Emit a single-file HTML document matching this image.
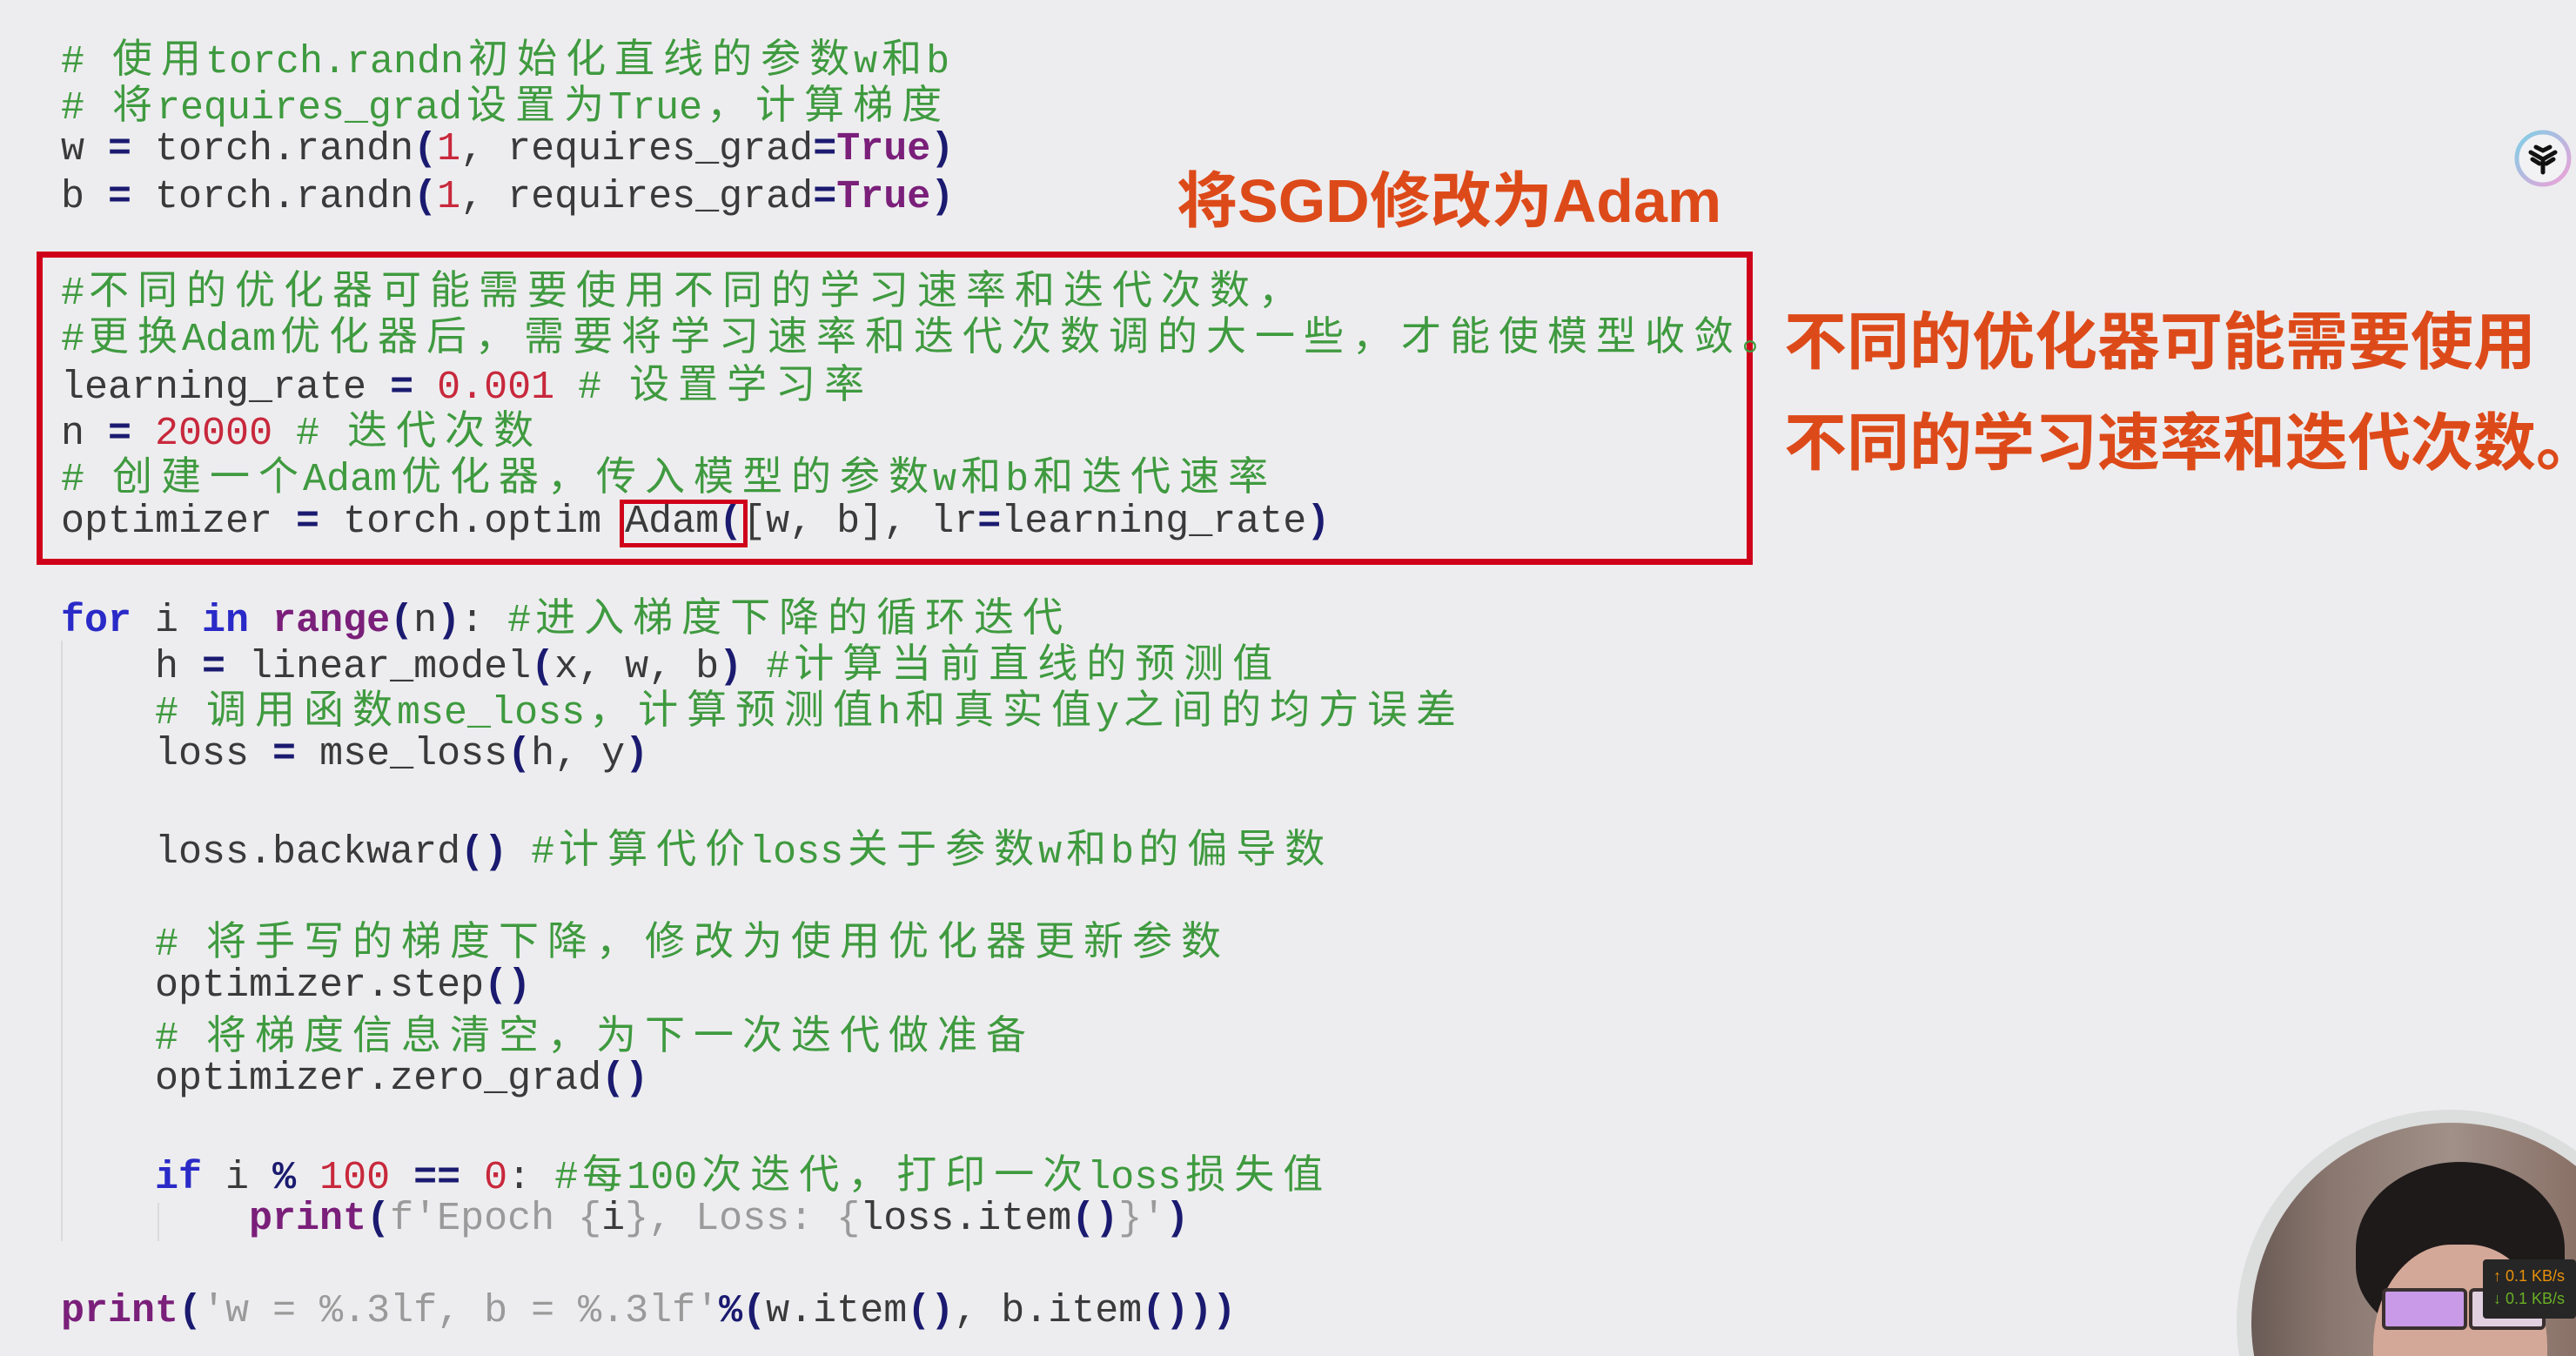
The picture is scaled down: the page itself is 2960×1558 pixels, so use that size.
<!DOCTYPE html>
<html><head><meta charset="utf-8">
<style>
html,body{margin:0;padding:0;overflow:hidden;width:2960px;height:1558px}
#wrap{width:2960px;height:1558px;background:#ededef;position:relative;overflow:hidden;font-family:"Liberation Mono","Noto Sans CJK SC",monospace;}
.l{position:absolute;white-space:pre;font-size:45px;line-height:54px;height:54px;color:#3a3a3a}
.c{color:#3f9a3f}
.k{color:#2a2ac8;font-weight:bold}
.p{color:#7a1f7a;font-weight:bold}
.o{color:#1a1a70;font-weight:bold}
.n{color:#c8283c}
.s{color:#9a9a9a}
.cj{display:inline-block;width:56px;text-align:center;font-family:"Noto Sans CJK SC",sans-serif;font-size:46px}
.box{position:absolute;border:7px solid #d0021b}
.big{position:absolute;color:#dd4a1a;font-family:"Liberation Sans","Noto Sans CJK SC",sans-serif;font-weight:bold;white-space:nowrap}
.guide{position:absolute;width:2px;background:#dadadc}
</style></head><body><div id="wrap">
<div class="l" style="left:70px;top:37px"><span class="c"># 使用torch.randn初始化直线的参数w和b</span></div>
<div class="l" style="left:70px;top:90px"><span class="c"># 将requires_grad设置为True，计算梯度</span></div>
<div class="l" style="left:70px;top:145px">w <span class="o">=</span> torch.randn<span class="o">(</span><span class="n">1</span>, requires_grad<span class="o">=</span><span class="p">True</span><span class="o">)</span></div>
<div class="l" style="left:70px;top:200px">b <span class="o">=</span> torch.randn<span class="o">(</span><span class="n">1</span>, requires_grad<span class="o">=</span><span class="p">True</span><span class="o">)</span></div>

<div class="big" style="left:1352px;top:186px;font-size:70px;line-height:90px">将SGD修改为Adam</div>

<div class="box" style="left:42px;top:289px;width:1958px;height:346px"></div>
<div class="l" style="left:70px;top:303px"><span class="c">#不同的优化器可能需要使用不同的学习速率和迭代次数，</span></div>
<div class="l" style="left:70px;top:356px"><span class="c">#更换Adam优化器后，需要将学习速率和迭代次数调的大一些，才能使模型收敛。</span></div>
<div class="l" style="left:70px;top:411px">learning_rate <span class="o">=</span> <span class="n">0.001</span> <span class="c"># 设置学习率</span></div>
<div class="l" style="left:70px;top:464px">n <span class="o">=</span> <span class="n">20000</span> <span class="c"># 迭代次数</span></div>
<div class="l" style="left:70px;top:517px"><span class="c"># 创建一个Adam优化器，传入模型的参数w和b和迭代速率</span></div>
<div class="l" style="left:70px;top:573px">optimizer <span class="o">=</span> torch.optim Adam<span class="o">(</span>[w, b], lr<span class="o">=</span>learning_rate<span class="o">)</span></div>
<div class="box" style="left:712px;top:574px;width:137px;height:45px;border-width:5px"></div>

<div class="big" style="left:2050px;top:348px;font-size:72px;line-height:92px">不同的优化器可能需要使用</div>
<div class="big" style="left:2050px;top:464px;font-size:72px;line-height:92px">不同的学习速率和迭代次数。</div>

<div class="guide" style="left:70px;top:736px;height:690px"></div>
<div class="guide" style="left:181px;top:1382px;height:44px"></div>

<div class="l" style="left:70px;top:679px"><span class="k">for</span> i <span class="k">in</span> <span class="p">range</span><span class="o">(</span>n<span class="o">)</span>: <span class="c">#进入梯度下降的循环迭代</span></div>
<div class="l" style="left:70px;top:732px">    h <span class="o">=</span> linear_model<span class="o">(</span>x, w, b<span class="o">)</span> <span class="c">#计算当前直线的预测值</span></div>
<div class="l" style="left:70px;top:785px">    <span class="c"># 调用函数mse_loss，计算预测值h和真实值y之间的均方误差</span></div>
<div class="l" style="left:70px;top:840px">    loss <span class="o">=</span> mse_loss<span class="o">(</span>h, y<span class="o">)</span></div>
<div class="l" style="left:70px;top:945px">    loss.backward<span class="o">()</span> <span class="c">#计算代价loss关于参数w和b的偏导数</span></div>
<div class="l" style="left:70px;top:1051px">    <span class="c"># 将手写的梯度下降，修改为使用优化器更新参数</span></div>
<div class="l" style="left:70px;top:1106px">    optimizer.step<span class="o">()</span></div>
<div class="l" style="left:70px;top:1159px">    <span class="c"># 将梯度信息清空，为下一次迭代做准备</span></div>
<div class="l" style="left:70px;top:1213px">    optimizer.zero_grad<span class="o">()</span></div>
<div class="l" style="left:70px;top:1319px">    <span class="k">if</span> i <span class="o">%</span> <span class="n">100</span> <span class="o">==</span> <span class="n">0</span>: <span class="c">#每100次迭代，打印一次loss损失值</span></div>
<div class="l" style="left:70px;top:1374px">        <span class="p">print</span><span class="o">(</span><span class="s">f'Epoch {</span>i<span class="s">}, Loss: {</span>loss.item<span class="o">()</span><span class="s">}'</span><span class="o">)</span></div>
<div class="l" style="left:70px;top:1480px"><span class="p">print</span><span class="o">(</span><span class="s">'w = %.3lf, b = %.3lf'</span><span class="o">%(</span>w.item<span class="o">()</span>, b.item<span class="o">()))</span></div>

<svg style="position:absolute;left:2888px;top:148px" width="68" height="68" viewBox="0 0 68 68">
<defs><linearGradient id="g" x1="0" y1="0" x2="1" y2="1"><stop offset="0" stop-color="#7ed0e6"/><stop offset="1" stop-color="#f0a0d8"/></linearGradient></defs>
<circle cx="34" cy="34" r="30" fill="#f2f2f4" stroke="url(#g)" stroke-width="5"/>
<path d="M20 27 L34 35 L48 27 M34 35 L34 50 M22 35 L30 40 M46 35 L38 40 M26 21 L34 25 L42 21" stroke="#111" stroke-width="5" fill="none" stroke-linecap="round"/>
</svg>

<div style="position:absolute;left:2570px;top:1275px;width:390px;height:283px;overflow:hidden">
<div style="position:absolute;left:0;top:0;width:490px;height:490px;border-radius:50%;background:#dcdddd"></div>
<div style="position:absolute;left:17px;top:15px;width:460px;height:460px;border-radius:50%;background:linear-gradient(90deg,#6a5a55 0%,#8a7870 20%,#a09088 50%,#8a7268 80%,#6a5a55 100%);overflow:hidden">
 <div style="position:absolute;left:120px;top:45px;width:240px;height:200px;border-radius:50% 50% 40% 40%;background:#1e1a1a"></div>
 <div style="position:absolute;left:140px;top:140px;width:200px;height:260px;border-radius:45%;background:#d4a898"></div>
 <div style="position:absolute;left:150px;top:190px;width:90px;height:40px;border:4px solid #3a3030;border-radius:6px;background:#c89ae8"></div>
 <div style="position:absolute;left:250px;top:190px;width:80px;height:40px;border:4px solid #3a3030;border-radius:6px;background:#e0d0e0"></div>
</div>
</div>
<div style="position:absolute;left:2853px;top:1447px;width:107px;height:68px;background:#262626;border-radius:4px;font-family:'Liberation Sans',sans-serif;font-size:18px;line-height:26px;padding:6px 0 0 12px;box-sizing:border-box;overflow:hidden;white-space:nowrap">
<div style="color:#e8900a">↑ 0.1 KB/s</div><div style="color:#6ab024">↓ 0.1 KB/s</div></div>
</div>
<script>
document.querySelectorAll('.l').forEach(function(el){
 var w=document.createTreeWalker(el,NodeFilter.SHOW_TEXT),nodes=[],n;
 while(n=w.nextNode())nodes.push(n);
 nodes.forEach(function(t){
  if(!/[\u3000-\u9fff\uff00-\uffef]/.test(t.nodeValue))return;
  var f=document.createDocumentFragment();
  t.nodeValue.split(/([\u3000-\u9fff\uff00-\uffef])/).forEach(function(p){
   if(!p)return;
   if(/^[\u3000-\u9fff\uff00-\uffef]$/.test(p)){var s=document.createElement('span');s.className='cj';s.textContent=p;f.appendChild(s);}
   else f.appendChild(document.createTextNode(p));
  });
  t.parentNode.replaceChild(f,t);
 });
});
</script>
</body></html>
